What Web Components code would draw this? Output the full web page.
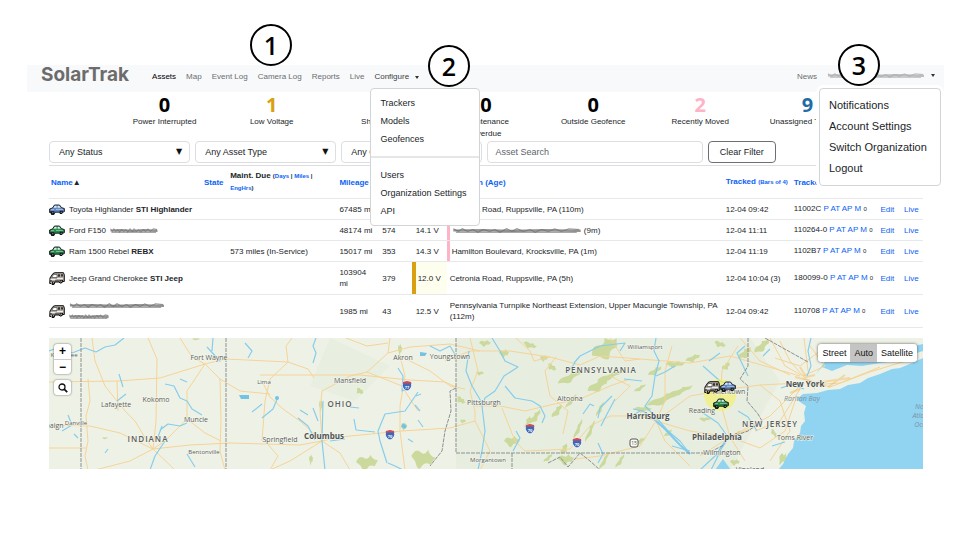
<!DOCTYPE html>
<html lang="en">
<head>
<meta charset="utf-8">
<title>SolarTrak Assets</title>
<style>
body{margin:0;background:#fff;color:#212529;font-family:"Liberation Sans",Arial,sans-serif;font-size:8px;line-height:12px;
--link:#0a62f5;--line:#e6e8ea;--edge:#dcdee1}
</style>
</head>
<body>
<solar-page></solar-page>
<script>
const define=(name,html)=>customElements.define(name,class extends HTMLElement{
  connectedCallback(){
    if(this.shadowRoot)return;
    const t=document.createElement('template');
    t.innerHTML=typeof html==='function'?html(this):html;
    this.attachShadow({mode:'open'}).append(t.content.cloneNode(true));
  }
});

const car=c=>`<path d="M.6 6 3.500 5 5.500 2H10.500L12.500 4.600 15.400 5.600V8.600L14 9 13 10.500H11L10.200 9.200H6L5 11.500H2.500L1.800 9.500H.6z" fill="${c}" stroke="#10141c" stroke-width=".9"/>
<path d="M5.800 2.800H7.600V4.800H4.400zM8.600 2.800h1.700L11.600 4.800H8.600z" fill="#dfe9f2"/><path d="M2 6.600h3M7 6.400h7" stroke="#fff" stroke-opacity=".45"/><path d="M1 8.300h4.500L5 11.500H2.500zM10.500 7.800h3.500L13 10.500h-2z" fill="#0c0e12"/><path d="M3.300 9.300h1v1h-1zM11.700 8.700h1v1h-1z" fill="#ccc"/>`;
const van=`<path d="M1 6 4 1.500 6 .7H14.500L15.300 3V9.500H13.500L12.500 11H11L10 10H6L5 12.500H3L2 11.500H.7z" fill="#b3aca4" stroke="#111" stroke-width="1"/>
<path d="M4.500 2.500H8V5.500H2.700z" fill="#fff" stroke="#333" stroke-width=".6"/><path d="M9 2.200h2v2.600H9zM12 2.200h2v2.400h-2z" fill="#333"/><path d="M1.500 7.500h5M8 6.500h6" stroke="#eee"/><path d="M3 9.500h3L5 12.500H3.200zM11 8h3v2l-2 1z" fill="#111"/><path d="M1 9h2M6 9h5" stroke="#222"/><path d="M4 10.300h1v1H4zM12 8.700h1v1h-1z" fill="#ccc"/>`;
const shapes={blue:car('#6488c4'),green:car('#268a48'),van};

define('asset-icon',e=>`<style>:host{display:inline-block;width:16px;height:13px;flex:none}svg{display:block}</style>
<svg width="16" height="13" viewBox="0 0 16 13" aria-hidden="true">${shapes[e.getAttribute('kind')]}</svg>`);

define('redacted-text',e=>`<style>:host{display:inline-block;height:7px;vertical-align:middle}svg{display:block;width:100%;height:100%}</style>
<svg viewBox="0 0 100 8" preserveAspectRatio="none" aria-hidden="true"><g fill="none" stroke="${e.getAttribute('tone')||'#6f6f6f'}">
<path d="M1 2 5 5 8 2 12 5 16 3 20 6 24 3 29 5 33 3 37 6 42 2 46 5 50 2 55 5 60 3 64 6 69 3 74 5 79 2 84 5 90 2 98 3" stroke-width="1.200" opacity=".7"/><path d="M1 4 24 3.500 48 4.500 71 3.500 99 4.500" stroke-width="2.500" opacity=".75"/><path d="M3 6H96" stroke-width="1.500" opacity=".6"/></g></svg>`);

define('step-badge',`<style>:host{box-sizing:border-box;width:42px;height:42px;border:2px solid #000;border-radius:50%;background:#fff;color:#000;display:grid;place-items:center;font:600 25px/36px "Open Sans","Noto Sans",sans-serif}</style><slot></slot>`);

define('drop-menu',`<style>:host{display:inline-block;position:relative}
button{all:unset;display:flex;align-items:center;gap:6px;cursor:pointer;color:#3c4044}
.caret{border:2px solid transparent;border-top:3px solid #333;border-bottom:0}
.panel{position:absolute;z-index:3;top:var(--menu-top,17px);left:var(--menu-left,auto);right:var(--menu-right,auto);box-sizing:border-box;min-width:var(--menu-width,110px);padding:var(--menu-pad,5px 0 5px);background:#fff;border:1px solid #d2d5d8;border-radius:4px;box-shadow:var(--menu-halo,none);font-size:var(--menu-font,9px);line-height:var(--menu-line,18px)}
</style><button type="button" aria-haspopup="true" aria-expanded="true"><slot name="label"></slot><span class="caret"></span></button><div class="panel"><slot></slot></div>`);

define('menu-link',`<style>:host{display:block}a{display:block;padding:0 9px;color:#212529;text-decoration:none;white-space:nowrap}</style><a href="#"><slot></slot></a>`);

define('solar-nav',`<style>:host{display:flex;align-items:center;box-sizing:border-box;height:27px;padding:0 9px 3px 14px;background:#f8f9fa;color:#6b6e71}
.brand{font:700 19px/20px Inter,sans-serif;color:#6c6c6c;text-decoration:none;margin:0 23px 4px 0}
ul{display:flex;gap:10px;list-style:none;margin:0;padding:0}
.end{margin-left:auto}
a.item{color:inherit;text-decoration:none;white-space:nowrap}
a.on{color:#000}
hr{border:0;border-top:2px solid #e4e6e8;margin:8px 0}
.configure{--menu-left:-4px;--menu-width:110px}
.account{--menu-top:16px;--menu-right:-6px;--menu-width:122px;--menu-pad:6px 0;--menu-font:11px;--menu-line:21px;--menu-halo:0 0 0 3px #fff}
redacted-text{width:98px}
</style>
<a class="brand" href="#">SolarTrak</a>
<ul>
<li><a class="item on" href="#">Assets</a></li><li><a class="item" href="#">Map</a></li><li><a class="item" href="#">Event Log</a></li><li><a class="item" href="#">Camera Log</a></li><li><a class="item" href="#">Reports</a></li><li><a class="item" href="#">Live</a></li>
<li><drop-menu class="configure"><span slot="label">Configure</span>
<menu-link>Trackers</menu-link><menu-link>Models</menu-link><menu-link>Geofences</menu-link><hr><menu-link>Users</menu-link><menu-link>Organization Settings</menu-link><menu-link>API</menu-link></drop-menu></li>
</ul>
<ul class="end"><li><a class="item" href="#">News</a></li>
<li><drop-menu class="account"><redacted-text slot="label" tone="#aaa"></redacted-text>
<menu-link>Notifications</menu-link><menu-link>Account Settings</menu-link><menu-link>Switch Organization</menu-link><menu-link>Logout</menu-link></drop-menu></li></ul>`);

define('stat-count',e=>`<style>:host{display:block;text-align:center}
b{display:block;font:700 20px/22px "Open Sans","Noto Sans",sans-serif;color:${e.getAttribute('tone')||'#000'}}
span{display:block;white-space:nowrap}</style><b>${e.getAttribute('value')}</b><span><slot></slot></span>`);

define('filter-select',e=>`<style>:host{display:block;position:relative}
select{appearance:none;box-sizing:border-box;width:100%;height:22px;padding:0 20px 0 9px;border:1px solid var(--edge);border-radius:4px;background:#fff;color:#212529;font:9px/20px "Liberation Sans",Arial,sans-serif}
i{position:absolute;right:8px;top:5px;font:normal 8px/12px "DejaVu Sans",sans-serif;color:#111;pointer-events:none}</style>
<select aria-label="${e.getAttribute('label')}"><option>${e.getAttribute('value')}</option></select><i aria-hidden="true">▼</i>`);

define('filter-bar',`<style>:host{display:grid;grid-template-columns:141fr 141fr 141fr 215fr 68fr 142fr;gap:5px}
input,button{box-sizing:border-box;width:100%;height:22px;border-radius:4px;background:#fff;font:9px/20px "Liberation Sans",Arial,sans-serif;min-width:0}
input{padding:0 7px;border:1px solid var(--edge)}input::placeholder{color:#5d646b;opacity:1}
button{padding:0;border:1px solid #6c7075;color:#212529}</style>
<filter-select label="Status" value="Any Status"></filter-select><filter-select label="Asset type" value="Any Asset Type"></filter-select><filter-select label="Group" value="Any Group"></filter-select>
<input type="search" aria-label="Asset Search" placeholder="Asset Search"><button type="button">Clear Filter</button>`);

const red=w=>`<redacted-text style="width:${w}px"></redacted-text>`;
const rows=[
 ['blue','Toyota Highlander <b>STI Highlander</b>','','67485 mi','','','Cetronia Road, Ruppsville, PA (110m)','12-04 09:42','11002C',''],
 ['green','Ford F150 &nbsp;'+red(48),'','48174 mi','574','14.1 V',red(130)+' (9m)','12-04 11:11','110264-0','moved'],
 ['green','Ram 1500 Rebel <b>REBX</b>','573 miles (In-Service)','15017 mi','353','14.3 V','Hamilton Boulevard, Krocksville, PA (1m)','12-04 11:19','1102B7','moved'],
 ['van','Jeep Grand Cherokee <b>STI Jeep</b>','','103904<br>mi','379','12.0 V','Cetronia Road, Ruppsville, PA (5h)','12-04 10:04 (3)','180099-0','low tall'],
 ['van',red(96)+'<br>'+red(40),'','1985 mi','43','12.5 V','Pennsylvania Turnpike Northeast Extension, Upper Macungie Township, PA (112m)','12-04 09:42','110708','tall'],
];
define('asset-table',`<style>:host{display:block}
table{width:100%;border-collapse:collapse;table-layout:fixed;border-top:1px solid var(--edge)}
th,td{padding:0 2px;text-align:left;vertical-align:middle;border-bottom:1px solid var(--line);line-height:11px}
th{height:32px;white-space:nowrap}
th.wrap{white-space:normal}
td{height:20px}.tall td{height:32px}
a{color:var(--link);text-decoration:none}small{font-size:6px}
.name{padding-left:0}.cell{display:flex;align-items:center;gap:4px}
.volt{padding-left:4px}.loc{padding-left:3px}
.moved .loc{box-shadow:inset 3px 0 #ffb3c6;padding-left:5px}
.low .volt{box-shadow:inset 4px 0 #d9a012;background:#fefeee;padding-left:6px}
td:nth-child(n+8){white-space:nowrap}
</style><table><colgroup>${[17.5,3,12.5,4.9,3.6,4,31.7,7.8,9.9,2.7,2.4].map(w=>`<col style="width:${w}%">`).join('')}</colgroup>
<thead><tr><th><a href="#">Name</a>▲</th><th><a href="#">State</a></th><th class="wrap">Maint. Due <small>(<a href="#">Days</a> | <a href="#">Miles</a> |<br><a href="#">EngHrs</a>)</small></th><th><a href="#">Mileage</a></th><th></th><th></th><th class="loc"><a href="#">Location (Age)</a></th><th><a href="#">Tracked <small>(Bars of 4)</small></a></th><th><a href="#">Tracker</a></th><th></th><th></th></tr></thead>
<tbody>${rows.map(([k,n,due,mi,h,v,loc,at,id,c])=>`<tr class="${c}"><td class="name"><div class="cell"><asset-icon kind="${k}"></asset-icon><span>${n}</span></div></td><td></td><td>${due}</td><td>${mi}</td><td>${h}</td><td class="volt">${v}</td><td class="loc">${loc}</td><td>${at}</td><td>${id} <a href="#">P</a> <a href="#">AT</a> <a href="#">AP</a> <a href="#">M</a> <small>0</small></td><td><a href="#">Edit</a></td><td><a href="#">Live</a></td></tr>`).join('')}</tbody></table>`);

const shield=(x,y,n)=>`<g transform="translate(${x} ${y})"><path d="M-4-4 0-5 4-4C6 1 3 4 0 5-3 4-6 1-4-4z" fill="#3f67b5" stroke="#fff" stroke-width=".8"/><path d="M-4-4 0-5 4-4 4.500-2.500H-4.500z" fill="#d24b50"/><text y="2.500" class="sh">${n}</text></g>`;
const blob=(x,y,w,h,r)=>`<path transform="translate(${x} ${y}) rotate(${r})" d="M${-w} 0Q${-w*.7} ${-h} ${-w*.3} ${-h*.6}T${w*.3} ${-h}Q${w*.6} ${-h*.2} ${w} ${-h*.3}L${w*.7} ${h*.6}Q${w*.2} ${h*.3} 0 ${h}T${-w*.6} ${h*.5}z"/>`;
define('asset-map',`<style>:host{display:block;position:relative;overflow:hidden}
svg.base{display:block;width:100%;height:131px}
text{font-family:"Open Sans","Noto Sans",sans-serif;fill:#5b5e60;text-anchor:middle;paint-order:stroke;stroke:#f4f6ec;stroke-width:1px;font-size:7px}
.s{font-size:6px}.big{font-size:8px;font-weight:700;fill:#505356}.st{font-size:8px;font-weight:600;letter-spacing:1px}
.sea{font-style:italic;fill:#7f93a0;stroke:none}.sh{font-size:4px;fill:#fff;stroke:none;font-weight:700}
.tools{position:absolute;left:5px;top:6px;display:grid;gap:6px}
.box{display:grid;background:#fff;border-radius:3px;box-shadow:0 0 2px #555;overflow:hidden}
.tools button{all:unset;box-sizing:border-box;width:17px;height:15px;display:grid;place-items:center;font:700 12px/15px "Liberation Sans",sans-serif;color:#000;text-align:center}
.tools .box button+button{border-top:1px solid #ccc}
.modes{position:absolute;right:6px;top:6px;display:flex;background:#fff;border-radius:3px;box-shadow:0 0 3px #555;overflow:hidden}
.modes button{all:unset;padding:0 4px;font-size:9px;line-height:18px;color:#111}.modes .on{background:#c4c4c4}
</style>
<svg class="base" viewBox="49 337 874 131" preserveAspectRatio="xMidYMid slice" role="img" aria-label="Asset map">
<rect x="-400" y="0" width="1800" height="800" fill="#eef2e6"/>
<g fill="#e2ebdc"><path d="M456 337H750L780 380 730 469H456z" opacity=".6"/><path d="M330 337 390 365 355 400 310 385z" opacity=".5"/></g>
<g fill="#cbd99d">${[[605,347,15,9,-30],[570,376,14,4,-28],[598,384,12,5,-30],[610,375,14,3,-20],[535,416,9,3,-50],[557,410,8,3,-50],[512,440,8,5,0],[528,422,7,3,-70],[564,448,6,3,-60],[578,428,11,2,-65],[590,430,12,2,-65],[566,458,8,5,0],[663,398,18,4,-22],[680,390,14,3,-20],[643,408,9,3,0],[675,363,10,3,0],[693,357,8,3,-20],[655,370,8,3,-30],[620,460,8,2,-55],[604,460,10,2,-60],[504,352,5,4,0],[530,344,7,3,20],[552,366,5,3,40],[485,342,6,3,0],[745,352,8,4,-40],[762,345,10,4,-40],[715,390,9,3,-15],[705,418,6,2,0],[367,461,11,7,0],[423,457,12,9,10],[360,390,4,3,40],[321,404,2,6,0],[404,425,3,4,0],[400,348,2,6,0],[105,437,3,1,0],[196,338,4,1,0],[311,458,2,5,0],[461,399,5,3,40],[463,420,3,2,0],[544,357,4,3,0],[640,440,6,2,-30],[668,432,5,2,-40],[783,457,4,6,20],[735,461,5,3,0],[774,432,5,2,60],[726,365,5,3,-40],[480,372,4,2,0],[548,457,6,2,-40],[640,387,7,2,-30],[720,343,6,3,20],[600,408,8,2,-60],[571,400,9,2,-50]].map(a=>blob(...a)).join('')}</g>
<path fill="#91d4f2" d="M923 357 912 362 900 367 892 368 880 373 868 377 860 382 848 384 840 388 828 389 817 392 803 393 797 398 800 401 806 405 804 412 805 420 801 425 800 432 794 440 793 447 788 453 783 463 778 469H1400V337H923zM815 374 822 366 832 370 847 364 862 365 880 362 895 360 907 355 923 350V343L900 348 850 354 827 358zM715 469 723 458 731 469z"/>
<g fill="none" stroke="#f6d396" stroke-width="1" stroke-linejoin="round">
<path d="M92 337 95 360 105 385 125 410 135 420 144 435 153 448M148 337 157 358 156 420 153 448M49 381 118 380 160 377 205 363 226 358 288 361M88 378 90 400 86 415 88 440 85 455 88 469M49 424 90 425 120 432 153 448M205 363 195 378 187 390 187 418 165 440 153 448M205 363 220 378 221 420 220 450 225 469M153 448 190 444 230 442 300 444 322 440M153 448 175 469M49 447H86M153 448 130 460 95 469M220 378 240 390 270 393M117 380 118 410M205 363 192 356 180 337M187 418 205 432 221 440"/>
<path d="M260 374 310 374 360 374 410 379 445 381 456 386M288 361 286 345 292 337M288 361 270 378 265 400 262 440M288 361 308 368 314 377M367 371 388 352 390 337M367 371 402 385 408 395 418 410M400 355 405 375 400 405 400 430 405 469M400 355 430 370 450 385 465 388M322 440 340 436 402 430 450 427 475 420M322 440 320 410 322 390 350 375 367 371M322 440 300 420 283 408 270 396 262 380M322 440 290 460 270 469M322 440 340 452 350 469M475 410 475 420 490 450 480 469M265 440 278 455 270 469M388 352 410 346 450 343 480 350M346 337 367 345 388 342"/>
<path d="M445 360 470 350 510 350 550 356 580 364 600 355 640 358 690 362 730 355 800 375M475 405 500 405 525 410 550 404 580 398 610 385 630 378M475 410 470 390 478 370 470 337M502 407 515 440 525 450 570 448 590 425 610 415 640 415 656 420 690 395 730 388 760 384 800 382M656 420 690 430 730 436 770 415 800 385M656 420 640 445 600 455 575 458M656 420 665 400 665 370 672 345M563 433 568 410 550 395 545 370 556 356M656 420 665 440 690 465M730 436 745 460M730 436 720 400 722 370 738 345M730 436 760 447 785 430 795 400M700 455 730 436 758 425M516 337 530 350 534 360 550 356M610 337 625 360 640 358M615 400 630 385 610 375"/>
<path d="M780 340 790 360 803 375 815 388M803 378 830 386 870 371 912 358M803 375 825 365 810 345M760 384 780 400 790 430 770 460M775 357 800 365 820 350M803 375 785 365 770 337M740 337 760 360 790 374M804 337 808 370M800 388 780 420 755 430M812 384 840 382 880 366"/>
</g>
<path d="M800 366 806 376 815 374M795 376 812 380M800 388 790 392M815 382 850 377M828 386 845 374M725 440 740 430" fill="none" stroke="#f3bd68" stroke-width="2" opacity=".5"/>
<g fill="none" stroke="#86cdec" stroke-width="1.200" stroke-linejoin="round">
<path d="M49 350 60 346 72 352 85 347 96 351 105 346 115 344 124 337M165 383 174 385 180 397 187 400 192 408 202 414M180 378 187 381M119 373 123 386M117 400 126 393M160 429 168 423 180 425 187 422M165 440 155 455 150 469M68 414 72 424 62 430M105 452 108 448M207 346 220 360 213 353M213 337 212 350M245 342 252 350 248 357M74 433 78 437M187 453 195 466M162 425 158 436"/>
<path d="M316 337 313 345 316 352 313 362M398 367 403 375 402 390 407 388M387 462 380 440 378 430 385 413 405 410 418 391M323 400 322 440 325 469M298 417 308 425 315 439M354 418 356 429 375 431M313 407 318 420M330 440 345 438M300 409 308 414M350 406 359 407M415 404 420 410M418 419 423 426M408 438 413 441M388 462 395 465 403 469M262 417 273 408 278 396M252 411 262 403M416 395 421 393M430 345 440 350 450 345 456 355"/>
<path d="M492 337 500 350 505 360 518 366 504 375 495 390 485 397 482 405 485 430 482 450 478 469M505 385 515 397 532 400 540 405 545 415 542 422M469 350 466 370 472 385 482 402M574 362 580 355 600 345 625 342 620 350M567 372 575 362M583 413 590 403 594 405M598 417 600 407 612 395M656 337 654 350 659 360 655 375 652 395 645 405 655 415 668 430 680 440 690 453M633 408 643 410 656 420M624 378 642 380M640 410 628 417M598 442 603 453 598 462M672 445 690 450M615 398 606 415 601 425M513 450 520 437 516 430M700 410 718 422 728 436 715 455 700 469M656 375 665 371 675 365"/>
<path d="M811 337 808 350 811 365 807 375M703 365 720 380 733 386M745 345 737 352 748 375M738 410 748 416 757 430M725 450 718 455 711 469M772 445 785 441M795 385 804 388M763 355 770 348M720 352 709 360M781 387 790 384"/>
</g>
<path d="M656 420 665 428 680 444 690 453M716 455 726 440" fill="none" stroke="#7fcbed" stroke-width="2"/>
<g fill="none" stroke="#8b9092" stroke-width="1" stroke-dasharray="4 1"><path d="M81 337V469M226 337V469M456 337V452H708L724 444M512 452V469M456 387 450 390 451 410 445 430 442 450 430 465M548 462 560 456 568 466 580 452 590 460 600 469M748 337 748 365 740 378 748 385 747 400 758 413 762 420 748 430 728 437M765 337 808 361"/></g>
<g fill="#74c3e2"><path d="M239 394h10v4h-8z"/><circle cx="277" cy="397" r="2"/><path d="m420 351 7 1-2 3h-5zM403 422l4 3-2 3-4-2z"/></g>
<circle cx="720" cy="394" r="16" fill="#f7f352" opacity=".55"/>
<text x="64" y="356" class="s">Kankakee</text><text x="209" y="359">Fort Wayne</text><text x="156" y="401">Kokomo</text><text x="116" y="406">Lafayette</text><text x="76" y="424" class="s">Danville</text><text x="45" y="427">Champaign</text><text x="196" y="421">Muncie</text><text x="148" y="441" class="st">INDIANA</text><text x="204" y="453" class="s">Bentonville</text><text x="264" y="383" class="s">Lima</text>
<text x="350" y="382">Mansfield</text><text x="403" y="359">Akron</text><text x="450" y="358">Youngstown</text><text x="340" y="406" class="st">OHIO</text><text x="280" y="441">Springfield</text><text x="324" y="438" class="big">Columbus</text><text x="484" y="404">Pittsburgh</text><text x="488" y="461" class="s">Morgantown</text>
<text x="645" y="348" class="s">Williamsport</text><text x="601" y="372" class="st">PENNSYLVANIA</text><text x="570" y="400">Altoona</text><text x="648" y="418" class="big">Harrisburg</text><text x="702" y="412">Reading</text><text x="729" y="393">Allentown</text><text x="717" y="439" class="big">Philadelphia</text><text x="722" y="454">Wilmington</text><text x="750" y="471">Vineland</text>
<text x="770" y="426" class="st">NEW JERSEY</text><text x="795" y="439">Toms River</text><text x="805" y="386" class="big">New York</text><text x="802" y="400" class="sea">Raritan Bay</text><text x="924" y="408" class="sea">North</text><text x="924" y="417" class="sea">Atlantic</text><text x="924" y="426" class="sea">Ocean</text>
${shield(407,385,'77')}${shield(390,434,'70')}${shield(530,428,'70')}${shield(577,442,'70')}
<rect x="630" y="438" width="8" height="8" rx="2" fill="#fff" stroke="#555"/><text x="634" y="444" style="font-size:5px">15</text>
<g transform="translate(704 380)">${shapes.van}</g><g transform="translate(720 379)">${shapes.blue}</g><g transform="translate(713 396)">${shapes.green}</g>
</svg>
<div class="tools"><div class="box"><button type="button" aria-label="Zoom in">+</button><button type="button" aria-label="Zoom out">−</button></div><div class="box"><button type="button" aria-label="Search map"><svg width="10" height="10" viewBox="0 0 10 10"><circle cx="4" cy="4" r="3" fill="none" stroke="#111" stroke-width="1.300"/><path d="m6.200 6.200 3 3" stroke="#111" stroke-width="1.800"/></svg></button></div></div>
<div class="modes"><button type="button">Street</button><button type="button" class="on" aria-pressed="true">Auto</button><button type="button">Satellite</button></div>`);

define('solar-page',`<style>:host{display:block;position:relative;padding-top:65px}
solar-nav{margin:0 23px 0 27px}
main{margin:0 44px 0 49px}
.stats{display:grid;grid-template-columns:repeat(7,1fr);margin:0 62px;padding-top:2px}
filter-bar{margin:1px 0 2px}
asset-map{margin-top:10px}
step-badge{position:absolute;z-index:4}
.one{left:250px;top:24px}.two{left:428px;top:45px}.three{right:87px;top:44px}
</style>
<solar-nav></solar-nav>
<main>
<section class="stats"><stat-count value="0">Power Interrupted</stat-count><stat-count value="1" tone="#d9a012">Low Voltage</stat-count><stat-count value="0">Shutdown</stat-count><stat-count value="0">Maintenance<br>Overdue</stat-count><stat-count value="0">Outside Geofence</stat-count><stat-count value="2" tone="#ffb3c6">Recently Moved</stat-count><stat-count value="9" tone="#1f6da6">Unassigned Trackers</stat-count></section>
<filter-bar></filter-bar>
<asset-table></asset-table>
<asset-map></asset-map>
</main>
<step-badge class="one">1</step-badge><step-badge class="two">2</step-badge><step-badge class="three">3</step-badge>`);
</script>
</body>
</html>
